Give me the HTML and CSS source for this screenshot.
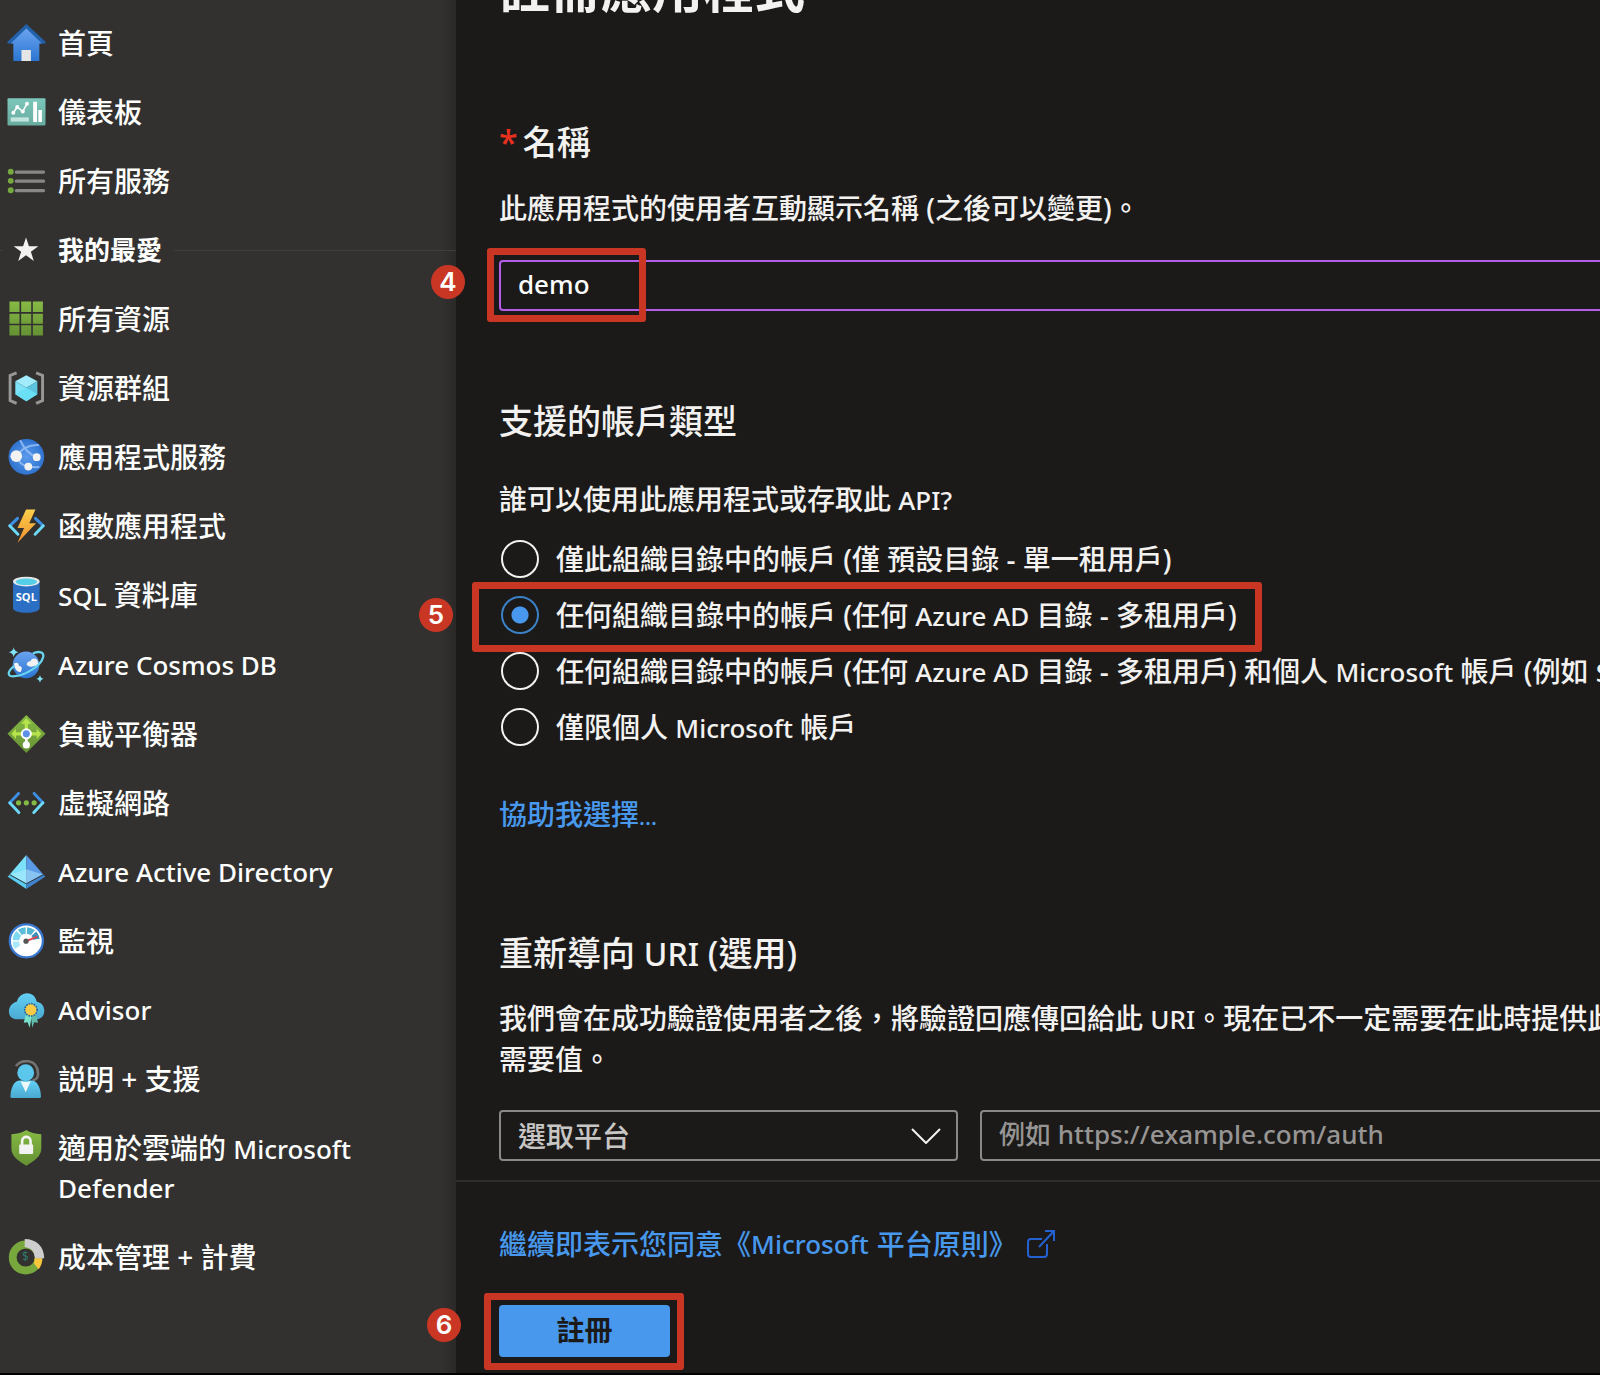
FILE: index.html
```html
<!DOCTYPE html>
<html lang="zh-Hant">
<head>
<meta charset="utf-8">
<meta name="viewport" content="width=device-width, initial-scale=1">
<title>註冊應用程式</title>
<link rel="stylesheet" href="styles.css">
</head>
<body>
<svg class="defs" aria-hidden="true">
  <defs>
    <linearGradient id="blue" x1="0" y1="0" x2="0" y2="1"><stop offset="0" stop-color="#6ba3f0"/><stop offset="1" stop-color="#2b76d2"/></linearGradient>
    <radialGradient id="globe"><stop offset="0" stop-color="#5c9cee"/><stop offset="1" stop-color="#2f73cf"/></radialGradient>
    <linearGradient id="teal" x1="0" y1="0" x2="0" y2="1"><stop offset="0" stop-color="#7cc6ba"/><stop offset="1" stop-color="#68ac9f"/></linearGradient>
    <linearGradient id="green" x1="0" y1="0" x2="0" y2="1"><stop offset="0" stop-color="#86b945"/><stop offset="1" stop-color="#659133"/></linearGradient>
    <linearGradient id="bolt" x1="0" y1="0" x2="0" y2="1"><stop offset="0" stop-color="#fccf4a"/><stop offset="1" stop-color="#f0912f"/></linearGradient>
    <linearGradient id="sky" x1="0" y1="0" x2="0" y2="1"><stop offset="0" stop-color="#63d0f5"/><stop offset="1" stop-color="#4ba9d0"/></linearGradient>
  </defs>
</svg>
<div class="app">
  <nav class="sidebar" aria-label="入口網站功能表">
    <a class="item" href="#home">
      <svg class="icon" viewBox="0 0 117 117"><path d="M58 0 117 55v5H0v-5z" fill="#2262ab"/><path d="M58 14 106 60H98v54H18V60H10z" fill="url(#blue)"/><path d="M43 80h29v34H43z" fill="#e6e6e6"/></svg>
      <span>首頁</span></a>
    <a class="item" href="#dashboard">
      <svg class="icon" viewBox="0 0 117 117"><rect y="16" width="117" height="84" rx="3" fill="url(#teal)"/><path d="M18 61 30 43 47 57 60 33" fill="none" stroke="#fff" stroke-width="5"/><g fill="#fff"><circle cx="18" cy="61" r="6"/><circle cx="30" cy="43" r="6"/><circle cx="47" cy="57" r="6"/><circle cx="60" cy="33" r="6"/><path d="M79 27h12v62H79zM95 52h11v37H95z"/></g><path d="M10 75h56v13H10z" fill="#c3e3de"/></svg>
      <span>儀表板</span></a>
    <a class="item" href="#services">
      <svg class="icon" viewBox="0 0 117 117"><g fill="#76a93e"><circle cx="10" cy="30" r="9"/><circle cx="10" cy="58" r="9"/><circle cx="10" cy="87" r="9"/></g><path d="M27 31h84M27 59h84M27 88h84" stroke="#878787" stroke-width="10" stroke-linecap="round"/></svg>
      <span>所有服務</span></a>
    <div class="item favorites">
      <svg class="icon" viewBox="0 0 117 117"><path d="M57 20 66 47H95L72 64 81 92 57 75 33 92 42 64 19 47H48z" fill="#f3f2f1"/></svg>
      <span>我的最愛</span></div>
    <a class="item" href="#resources">
      <svg class="icon" viewBox="0 0 117 117"><path d="M6 5h31v32H6zM42 5h31v32H42zM78 5h31v32H78zM6 42h31v31H6zM42 42h31v31H42zM78 42h31v31H78zM6 78h31v31H6zM42 78h31v31H42zM78 78h31v31H78z" fill="url(#green)"/></svg>
      <span>所有資源</span></a>
    <a class="item" href="#groups">
      <svg class="icon" viewBox="0 0 117 117"><path d="M28 12 8 20v77l20 9M88 12l20 8v77l-20 9" fill="none" stroke="#979797" stroke-width="9"/><path d="M58 19 92 38 58 58 24 38z" fill="#a2ebfc"/><path d="M24 38 58 58v41L24 78z" fill="#7ee3f8"/><path d="M92 38 58 58v41l34-21z" fill="#5cc5dd"/><path d="M24 78 58 58 92 78 58 99z" fill="#6adff6"/></svg>
      <span>資源群組</span></a>
    <a class="item" href="#appservice">
      <svg class="icon" viewBox="0 0 117 117"><circle cx="58" cy="58" r="55" fill="url(#globe)"/><g fill="none" stroke="#9cc4f6" stroke-width="6" opacity=".8"><path d="M27 56C46 30 72 20 97 22M39 7C52 35 70 52 90 59M27 56C34 74 48 86 64 88S92 92 98 88"/></g><g fill="#f2f2f2"><circle cx="27" cy="56" r="18"/><circle cx="90" cy="59" r="12"/><circle cx="64" cy="88" r="12"/></g></svg>
      <span>應用程式服務</span></a>
    <a class="item" href="#functions">
      <svg class="icon" viewBox="0 0 117 117"><g fill="none" stroke-width="9" stroke-linecap="round"><path d="M31 35 7 58M86 35l24 23" stroke="#3c8fe2"/><path d="M7 58l25 26M110 58 85 84" stroke="#6cd9f7"/></g><path d="M57 8H86L67 50H88L31 110 51 65H31z" fill="url(#bolt)"/></svg>
      <span>函數應用程式</span></a>
    <a class="item" href="#sql">
      <svg class="icon" viewBox="0 0 117 117"><path d="M17 18v82c0 7 18 13 41 13s41-6 41-13V18z" fill="#2a6fc4"/><ellipse cx="58" cy="17" rx="41" ry="15" fill="#e8e8e8"/><ellipse cx="58" cy="18" rx="33" ry="10" fill="#55cfe8"/><text x="58" y="76" text-anchor="middle" class="sql">SQL</text></svg>
      <span><span class="en">SQL</span> 資料庫</span></a>
    <a class="item" href="#cosmos">
      <svg class="icon" viewBox="0 0 117 117"><circle cx="57" cy="58" r="41" fill="url(#blue)"/><path d="M59 58c0-9 8-12 12-11 2-11 20-12 22 0 5 14-4 17-10 14-8 4-18 4-24-3zM20 54c10-6 16 0 15 8 9-1 12 7 6 17-10 4-20-8-21-25z" fill="#f2f2f2"/><path d="M20 62C-4 82 0 96 22 93 50 92 104 62 110 33 113 16 92 16 78 23" fill="none" stroke="#67d5ee" stroke-width="7"/><path d="M19 4q2 13 15 15-13 2-15 15-2-13-15-15 13-2 15-15zM100 89q2 11 12 12-10 2-12 12-2-10-12-12 10-1 12-12z" fill="#82e3f7"/></svg>
      <span class="en">Azure Cosmos DB</span></a>
    <a class="item" href="#loadbalancer">
      <svg class="icon" viewBox="0 0 117 117"><path d="M58 0 117 58 58 117 0 58z" fill="url(#green)"/><path d="M58 10 74 27H63V53H90V42l14 16-14 16V63H26v11L12 58 26 42v11H53V27H42z" fill="#b6e34b"/><path d="M58 60v30" stroke="#fff" stroke-width="8"/><circle cx="58" cy="58" r="14" fill="#5b92e8" stroke="#fff" stroke-width="6"/><circle cx="58" cy="92" r="11" fill="#fff"/></svg>
      <span>負載平衡器</span></a>
    <a class="item" href="#vnet">
      <svg class="icon" viewBox="0 0 117 117"><g fill="none" stroke-width="9" stroke-linecap="round"><path d="M34 29 7 58M82 29l27 29" stroke="#3c8fe2"/><path d="M7 58l28 30M109 58 81 88" stroke="#6cd9f7"/></g><g fill="#83b944"><circle cx="34" cy="58" r="8"/><circle cx="58" cy="58" r="8"/><circle cx="82" cy="58" r="8"/></g></svg>
      <span>虛擬網路</span></a>
    <a class="item" href="#aad">
      <svg class="icon" viewBox="0 0 117 117"><path d="M58 6 6 67 58 97z" fill="#7be0fa"/><path d="M58 6 111 67 58 97z" fill="#5b9be6"/><path d="M58 50 6 67 58 97 111 67z" fill="#b5edfd" opacity=".5"/><path d="M0 72 9 66 58 94v17z" fill="#59cdf2"/><path d="M117 72l-9-6-50 28v17z" fill="#3f84cf"/><path d="M7 67 58 95 110 67" fill="none" stroke="#323130" stroke-width="3"/></svg>
      <span class="en">Azure Active Directory</span></a>
    <a class="item" href="#monitor">
      <svg class="icon" viewBox="0 0 117 117"><circle cx="58" cy="58" r="51" fill="#fff" stroke="#3a79d2" stroke-width="7"/><g fill="none" stroke-width="20"><path d="M31 78A32 32 0 0 1 26 60" stroke="#a9e8fa"/><path d="M26 56A32 32 0 0 1 35 35" stroke="#7dd9f2"/><path d="M38 32A32 32 0 0 1 56 26" stroke="#5bbdd9"/><path d="M60 26A32 32 0 0 1 78 33" stroke="#55b5d0"/><path d="M81 36A32 32 0 0 1 89 53" stroke="#3c91bd"/></g><path d="M58 59 92 45" stroke="#e0434a" stroke-width="6"/><circle cx="57" cy="59" r="8" fill="#565656"/></svg>
      <span>監視</span></a>
    <a class="item" href="#advisor">
      <svg class="icon" viewBox="0 0 117 117"><path d="M27 87C-2 87-5 42 29 32 39-1 83-2 90 33c33 5 29 54 0 54z" fill="url(#sky)"/><path d="M57 70 50 98l12-2 6 17 8-40z" fill="#78e3cd"/><path d="M87 70l7 28-12-2-6 17-4-40z" fill="#62bdac"/><circle cx="72" cy="58" r="19" fill="#fbcb48" stroke="#1f659d" stroke-width="5" stroke-dasharray="5 3"/></svg>
      <span class="en">Advisor</span></a>
    <a class="item" href="#support">
      <svg class="icon" viewBox="0 0 117 117"><path d="M26 19C40-4 94-6 94 43q0 18-17 19" fill="none" stroke="#727272" stroke-width="8"/><path d="M9 112C10 84 20 66 36 63h40c16 3 26 21 27 49q0 5-5 5H14q-5 0-5-5z" fill="url(#sky)"/><circle cx="56" cy="39" r="26" fill="#5cc7ec"/><path d="M40 65q16 6 32 0L56 99z" fill="#eef8fb"/></svg>
      <span>説明 + 支援</span></a>
    <a class="item" href="#defender">
      <svg class="icon" viewBox="0 0 117 117"><path d="M12 16Q40 15 58 3q18 12 46 13v44c0 26-24 39-46 53C36 99 12 86 12 60z" fill="url(#green)"/><path d="M45 52V37c0-17 26-17 26 0v15" fill="none" stroke="#f5f5f5" stroke-width="8"/><rect x="36" y="48" width="43" height="29" rx="3" fill="#f2f2f2"/></svg>
      <span>適用於雲端的 <span class="en">Microsoft</span> <span class="en">Defender</span></span></a>
    <a class="item" href="#cost">
      <svg class="icon" viewBox="0 0 117 117"><circle cx="56" cy="60" r="40" fill="none" stroke="#78a83d" stroke-width="24"/><path d="M82 79 96 96A56 56 0 0 0 107 62H83z" fill="#fbc53c"/><path d="M53 3v25q29 2 32 34h28C113 27 89 3 53 3z" fill="#cdcdcd"/><text x="55" y="72" text-anchor="middle" class="dollar">$</text></svg>
      <span>成本管理 + 計費</span></a>
  </nav>

  <main class="blade">
    <form class="form">
      <h1>註冊應用程式</h1>
      <h2><span class="required">*</span><label for="name">名稱</label></h2>
      <p id="name-help">此應用程式的使用者互動顯示名稱 (之後可以變更)。</p>
      <div class="field">
        <input id="name" class="box name" type="text" value="demo" aria-describedby="name-help">
        <span class="mark mark-name"></span><span class="step step-name">4</span>
      </div>

      <h2 class="section types">支援的帳戶類型</h2>
      <fieldset>
        <legend>誰可以使用此應用程式或存取此 <span class="en">API?</span></legend>
        <label class="choice"><input type="radio" name="type"><span>僅此組織目錄中的帳戶 (僅 預設目錄 - 單一租用戶)</span></label>
        <label class="choice"><input type="radio" name="type" checked><span>任何組織目錄中的帳戶 (任何 <span class="en">Azure AD</span> 目錄 - 多租用戶)</span><span class="mark mark-type"></span><span class="step step-type">5</span></label>
        <label class="choice"><input type="radio" name="type"><span>任何組織目錄中的帳戶 (任何 <span class="en">Azure AD</span> 目錄 - 多租用戶) 和個人 <span class="en">Microsoft</span> 帳戶 (例如 <span class="en">Skype</span></span></label>
        <label class="choice"><input type="radio" name="type"><span>僅限個人 <span class="en">Microsoft</span> 帳戶</span></label>
      </fieldset>
      <p class="help"><a href="#help">協助我選擇<span class="dots">...</span></a></p>

      <h2 class="section redirect" id="redirect">重新導向 <span class="en">URI</span> (選用)</h2>
      <p>我們會在成功驗證使用者之後，將驗證回應傳回給此 <span class="en">URI</span>。現在已不一定需要在此時提供此<br>需要值。</p>
      <div class="uri">
        <div class="platform">
          <select class="box" aria-label="選取平台"><option>選取平台</option></select>
          <svg class="chevron" viewBox="0 0 30 16"><path d="M1 1 15 15 29 1" fill="none" stroke="#f3f2f1" stroke-width="2"/></svg>
        </div>
        <input class="box url" type="text" placeholder="例如 https://example.com/auth" aria-labelledby="redirect">
      </div>
    </form>

    <footer class="footer">
      <a class="policy" href="#policy">繼續即表示您同意《<span class="en">Microsoft</span> 平台原則》<svg class="external" viewBox="0 0 28 28"><path d="M15 9H4Q1 9 1 12V24Q1 27 4 27H17Q20 27 20 24V14M12 17 27 1M18 1H27V11" fill="none" stroke="#2461d0" stroke-width="2"/></svg></a>
      <div class="submit">
        <button type="button">註冊</button>
        <span class="mark mark-submit"></span><span class="step step-submit">6</span>
      </div>
    </footer>
  </main>
</div>
</body>
</html>
```
FILE: styles.css
```css
* { box-sizing: border-box; }

body {
  margin: 0;
  background: #fff;
  color: #f3f2f1;
  font: 500 28px/40px "Noto Sans", "Noto Sans CJK TC", sans-serif;
}

a { color: #4899ee; text-decoration: none; }
h1, h2, p { margin: 0; }
.en { font-size: 26px; }
.defs { position: absolute; width: 0; height: 0; }

.app {
  display: flex;
  min-height: calc(100vh - 10px);
  overflow: clip;
  background: #1b1a19;
  border-bottom: 2px solid #000;
}

/* Sidebar */
.sidebar {
  flex: 0 0 456px;
  padding-top: 8px;
  background: linear-gradient(to left, #2a2928, #323130 14px);
}
.item {
  display: flex;
  gap: 12px;
  padding: 16px 90px 15px 7px;
  color: #fff;
  line-height: 38px;
}
.icon { flex: none; width: 39px; height: 38px; }
.favorites {
  position: relative;
  align-items: center;
  padding-right: 0;
  font-size: 26px;
  font-weight: 700;
}
.favorites::before {
  content: "";
  position: absolute;
  left: 0;
  width: 3px;
  height: 1px;
  background: #3f3e3d;
}
.favorites::after {
  content: "";
  flex: 1;
  height: 1px;
  background: #3f3e3d;
}
.sql { fill: #fff; font: 700 34px "Open Sans", sans-serif; }
.dollar { fill: #2f7d6d; font: 400 36px "Open Sans", sans-serif; }

/* Blade */
.blade {
  flex: 1;
  min-width: 0;
  display: flex;
  flex-direction: column;
  white-space: nowrap;
}
.form { padding: 0 0 19px 43px; }
h1 {
  margin-top: -38px;
  font-size: 51px;
  line-height: 52px;
}
h2 {
  font-size: 34px;
  font-weight: 500;
  line-height: 48px;
}
h2 .en { font-size: 32px; }
h1 + h2 { margin: 104px 0 22px; }
.required { margin-right: 5px; color: #e8301f; }
.field { position: relative; margin-top: 32px; }
.section { margin-bottom: 20px; }
.types { margin: 86px 0 34px; }
.redirect { margin-top: 93px; }

.box {
  width: 100%;
  height: 51px;
  padding: 0 17px;
  border: 2px solid #8a8886;
  border-radius: 4px;
  background: #1b1a19;
  color: #c8c6c4;
  font: inherit;
  outline: 0;
  appearance: none;
}
.field, .uri { margin-right: -8px; }
.name { display: block; border-color: #b55de6; color: #fff; }
.name, .url { padding-bottom: 4px; font-size: 26px; line-height: normal; }
.box::placeholder { color: #979593; opacity: 1; }

fieldset {
  display: flex;
  flex-direction: column;
  align-items: flex-start;
  gap: 18px;
  margin: 0;
  padding: 0;
  border: 0;
}
legend { padding: 0; margin-bottom: 20px; }
.choice {
  position: relative;
  display: flex;
  align-items: center;
  gap: 17px;
  height: 38px;
  margin-left: 2px;
}
.choice input {
  flex: none;
  width: 38px;
  height: 38px;
  margin: 0;
  border: 2px solid #f3f2f1;
  border-radius: 50%;
  appearance: none;
}
.choice input:checked {
  border-color: #3c80c8;
  background: radial-gradient(circle, #4899ee 8px, transparent 9px);
}
.help { margin-top: 48px; }
.dots { font-size: 22px; }

.uri { display: flex; gap: 22px; margin-top: 31px; }
.platform { position: relative; flex: 0 0 459px; }
.uri > .box { flex: 1; }
.chevron {
  position: absolute;
  right: 17px;
  top: 18px;
  width: 30px;
  height: 16px;
  pointer-events: none;
}

/* Footer */
.footer {
  padding: 42px 0 16px 43px;
  border-top: 2px solid #2e2d2c;
}
.policy { display: inline-flex; align-items: center; }
.policy .en { margin-right: 8px; }
.external { width: 28px; height: 28px; margin-left: 10px; }
.submit { position: relative; width: 171px; margin-top: 41px; }
button {
  display: block;
  width: 100%;
  height: 52px;
  padding: 0 0 2px;
  border: 0;
  border-radius: 4px;
  background: #4899ee;
  color: #1b1a19;
  font: inherit;
  font-weight: 700;
}

/* Step annotations */
.mark {
  position: absolute;
  border: 7px solid #c93624;
  border-radius: 3px;
  pointer-events: none;
}
.step {
  position: absolute;
  width: 34px;
  height: 34px;
  border-radius: 50%;
  background: #c93624;
  color: #fff;
  font: 600 26px/34px Inter, sans-serif;
  text-align: center;
}
.mark-name { left: -12px; top: -12px; width: 159px; height: 74px; }
.step-name { left: -68px; top: 5px; }
.mark-type { inset: -14px -25px -18px -29px; }
.step-type { left: -82px; top: 2px; }
.mark-submit { inset: -12px -14px -13px -15px; }
.step-submit { left: -72px; top: 3px; }
```
